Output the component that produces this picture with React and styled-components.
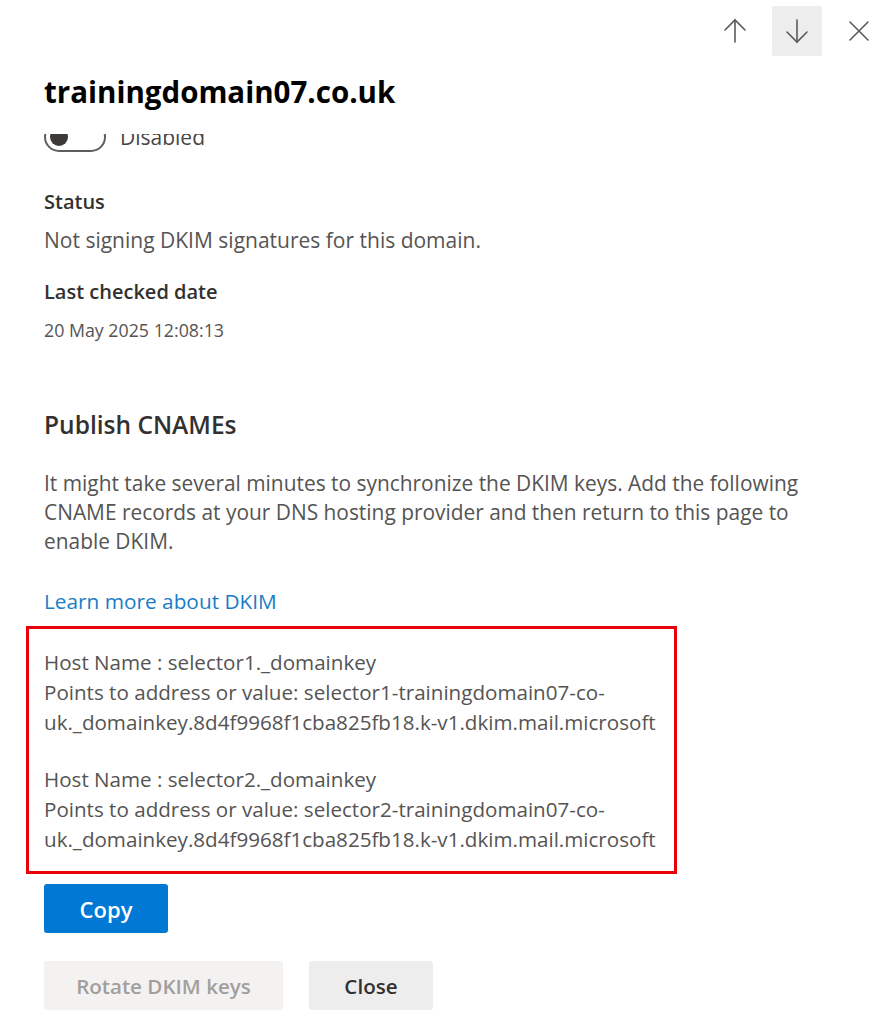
import React from 'react';
import styled, { createGlobalStyle } from 'styled-components';

const GlobalStyle = createGlobalStyle`
  body {
    margin: 0;
    background: #ffffff;
    font-family: "Open Sans", "Noto Sans", sans-serif;
    color: #323130;
  }
`;

const Panel = styled.div`
  width: 888px;
  height: 1024px;
  display: flex;
  flex-direction: column;
  overflow: hidden;
  background: #ffffff;
`;

const TopBar = styled.div`
  display: flex;
  justify-content: flex-end;
  gap: 12px;
  margin-top: 6px;
  padding-right: 4px;
`;

const IconButton = styled.button`
  width: 50px;
  height: 50px;
  border: none;
  border-radius: 2px;
  padding: 0;
  display: flex;
  align-items: center;
  justify-content: center;
  background: ${p => (p.$active ? '#ededed' : 'transparent')};
  color: #4a4a4a;
`;

const Title = styled.h1`
  margin: 18px 0 0;
  padding: 0 44px 24px;
  font-size: 29.5px;
  line-height: 36px;
  font-weight: 700;
  color: #000000;
`;

const ScrollArea = styled.div`
  flex: 1;
  overflow: hidden;
`;

const Content = styled.div`
  margin-top: -12px;
  padding: 0 44px;
  display: flex;
  flex-direction: column;
`;

const ToggleRow = styled.div`
  display: flex;
  align-items: center;
  gap: 14px;
  height: 30px;
  font-size: 21px;
  color: #484644;
`;

const Toggle = styled.span`
  box-sizing: border-box;
  width: 62px;
  height: 30px;
  border: 2px solid #605e5c;
  border-radius: 15px;
  display: flex;
  align-items: center;
  padding-left: 4px;

  &::before {
    content: '';
    width: 18px;
    height: 18px;
    border-radius: 50%;
    background: #3b3a39;
  }
`;

const Label = styled.div`
  font-size: 20px;
  line-height: 26px;
  font-weight: 600;
  color: #323130;
  margin-top: ${p => p.$gap}px;
`;

const Value = styled.div`
  font-size: ${p => (p.$small ? 17.8 : 21)}px;
  line-height: ${p => (p.$small ? 24 : 26)}px;
  color: #555453;
  margin-top: ${p => p.$gap}px;
`;

const SectionTitle = styled.h2`
  margin: 69px 0 0;
  font-size: 24.5px;
  line-height: 28px;
  font-weight: 600;
  color: #323130;
`;

const Paragraph = styled.p`
  margin: 30px 0 0;
  font-size: 20.9px;
  line-height: 29px;
  color: #555453;
  max-width: 800px;
`;

const LearnLink = styled.a`
  margin-top: 31px;
  font-size: 20.8px;
  line-height: 29px;
  color: #1a7dc5;
  text-decoration: none;
  align-self: flex-start;
`;

const RecordBox = styled.div`
  box-sizing: border-box;
  width: 651px;
  margin: 10px 0 0 -18px;
  border: 3px solid #e8000b;
  padding: 18px 8px 17px 15px;
  display: flex;
  flex-direction: column;
  gap: 27px;
`;

const Record = styled.div`
  display: flex;
  flex-direction: column;
`;

const RecordLine = styled.div`
  font-size: 20.6px;
  line-height: 30px;
  color: #555453;
`;

const Button = styled.button`
  box-sizing: border-box;
  height: 49px;
  width: ${p => p.$width}px;
  border: none;
  border-radius: 3px;
  font-family: inherit;
  font-size: ${p => (p.$primary ? 22 : 20.6)}px;
  font-weight: 600;
  padding: 0;
  background: ${p =>
    p.$primary ? '#0078d4' : p.$disabled ? '#f3f2f1' : '#ededed'};
  color: ${p => (p.$primary ? '#ffffff' : p.$disabled ? '#a19f9d' : '#323130')};
`;

const ButtonRow = styled.div`
  display: flex;
  gap: 26px;
  margin-top: ${p => p.$gap}px;
`;

const ArrowIcon = ({ down }) => (
  <svg width="28" height="28" viewBox="0 0 28 28" fill="none" stroke="#5a5a5a" strokeWidth="1.6" strokeLinecap="round">
    {down ? (
      <>
        <path d="M14 3 V25" />
        <path d="M4 15 L14 25 L24 15" />
      </>
    ) : (
      <>
        <path d="M14 3 V25" />
        <path d="M4 13 L14 3 L24 13" />
      </>
    )}
  </svg>
);

const CloseIcon = () => (
  <svg width="22" height="22" viewBox="0 0 22 22" fill="none" stroke="#5a5a5a" strokeWidth="1.6" strokeLinecap="round">
    <path d="M2 2 L20 20 M20 2 L2 20" />
  </svg>
);

const records = [
  {
    host: 'selector1._domainkey',
    value: 'selector1-trainingdomain07-co-uk._domainkey.8d4f9968f1cba825fb18.k-v1.dkim.mail.microsoft'
  },
  {
    host: 'selector2._domainkey',
    value: 'selector2-trainingdomain07-co-uk._domainkey.8d4f9968f1cba825fb18.k-v1.dkim.mail.microsoft'
  }
];

export default function App() {
  return (
    <Panel>
      <GlobalStyle />
      <TopBar>
        <IconButton aria-label="Previous"><ArrowIcon /></IconButton>
        <IconButton $active aria-label="Next"><ArrowIcon down /></IconButton>
        <IconButton aria-label="Close"><CloseIcon /></IconButton>
      </TopBar>
      <Title>trainingdomain07.co.uk</Title>
      <ScrollArea>
        <Content>
          <ToggleRow>
            <Toggle />
            Disabled
          </ToggleRow>
          <Label $gap={37}>Status</Label>
          <Value $gap={12}>Not signing DKIM signatures for this domain.</Value>
          <Label $gap={26}>Last checked date</Label>
          <Value $small $gap={13}>20 May 2025 12:08:13</Value>
          <SectionTitle>Publish CNAMEs</SectionTitle>
          <Paragraph>
            It might take several minutes to synchronize the DKIM keys. Add the following
            CNAME records at your DNS hosting provider and then return to this page to
            enable DKIM.
          </Paragraph>
          <LearnLink href="#">Learn more about DKIM</LearnLink>
          <RecordBox>
            {records.map(r => (
              <Record key={r.host}>
                <RecordLine>Host Name : {r.host}</RecordLine>
                <RecordLine>Points to address or value: {r.value}</RecordLine>
              </Record>
            ))}
          </RecordBox>
          <ButtonRow $gap={10}>
            <Button $primary $width={124}>Copy</Button>
          </ButtonRow>
          <ButtonRow $gap={28}>
            <Button $disabled $width={239}>Rotate DKIM keys</Button>
            <Button $width={124}>Close</Button>
          </ButtonRow>
        </Content>
      </ScrollArea>
    </Panel>
  );
}
